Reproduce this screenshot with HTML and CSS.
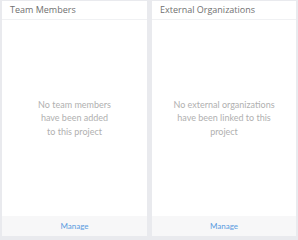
FILE: index.html
```html
<!DOCTYPE html>
<html lang="en">
<head>
    <meta charset="UTF-8">
    <meta name="viewport" content="width=device-width, initial-scale=1.0">
    <title>Project Links</title>
    <link rel="stylesheet" href="styles.css">
</head>
<body>
    <div class="panels">
        <div class="card">
            <div class="card-header">Team Members</div>
            <div class="card-body">
                <p class="empty">No team members<br>have been added<br>to this project</p>
            </div>
            <div class="card-footer"><a href="#">Manage</a></div>
        </div>

        <div class="card">
            <div class="card-header">External Organizations</div>
            <div class="card-body">
                <p class="empty">No external organizations<br>have been linked to this<br>project</p>
            </div>
            <div class="card-footer"><a href="#">Manage</a></div>
        </div>
    </div>
</body>
</html>
```

FILE: styles.css
```css
:root {
    --page: #e9eaee;
    --card: #ffffff;
    --line: #f0f1f3;
    --muted: #b0b0b0;
    --title: #707070;
    --link: #5a9be0;
}

* {
    margin: 0;
    padding: 0;
    box-sizing: border-box;
}

body {
    background: var(--page);
    font-family: 'Open Sans', sans-serif;
    width: 298px;
    height: 240px;
    overflow: hidden;
}

.panels {
    display: grid;
    grid-template-columns: 145px 144px;
    gap: 5px;
    padding: 1px 2px 4px 2px;
    height: 240px;
}

.card {
    background: var(--card);
    display: flex;
    flex-direction: column;
}

.card-header {
    height: 19px;
    padding: 0 8px;
    font-size: 9px;
    line-height: 17px;
    color: var(--title);
    border-bottom: 1px solid var(--line);
}

.card-body {
    flex: 1;
    display: flex;
    align-items: center;
    justify-content: center;
    padding: 0 10px;
}

.empty {
    font-family: 'Lato', sans-serif;
    font-size: 9px;
    line-height: 13.5px;
    color: var(--muted);
    text-align: center;
}

.card-footer {
    height: 20px;
    background: #f7f7f8;
    text-align: center;
    font-family: 'Lato', sans-serif;
    font-size: 8px;
    line-height: 21px;
}

.card-footer a {
    color: var(--link);
    text-decoration: none;
}
```
